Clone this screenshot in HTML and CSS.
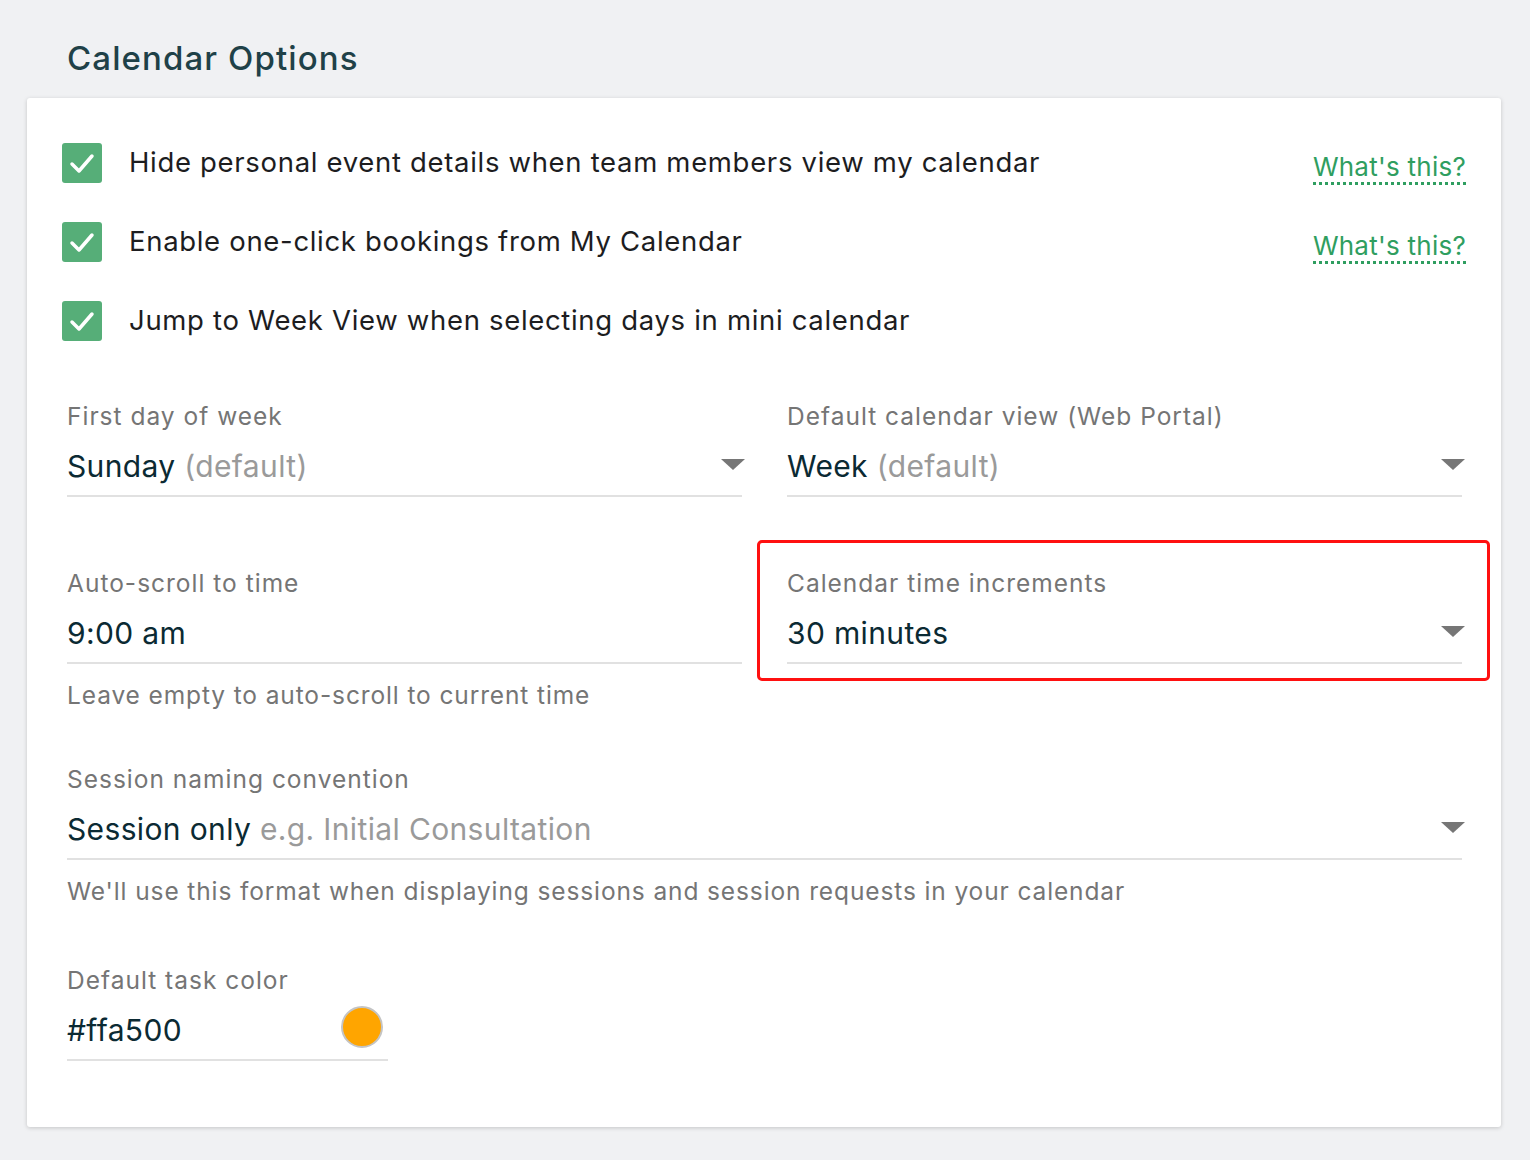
FILE: index.html
```html
<!DOCTYPE html>
<html lang="en">
<head>
  <meta charset="UTF-8" />
  <meta name="viewport" content="width=device-width, initial-scale=1.0"/>
  <title>Calendar Options</title>
  <link rel="stylesheet" href="styles.css">
</head>
<body>
  <div class="page">
    <h2 class="section-title">Calendar Options</h2>

    <div class="card">
      <div class="checks">
        <div class="check-row">
          <span class="checkbox"><svg viewBox="0 0 40 40"><path d="M10 21 L17 28 L30 13" /></svg></span>
          <span class="check-label">Hide personal event details when team members view my calendar</span>
          <a class="help-link" href="#">What's this?</a>
        </div>
        <div class="check-row">
          <span class="checkbox"><svg viewBox="0 0 40 40"><path d="M10 21 L17 28 L30 13" /></svg></span>
          <span class="check-label">Enable one-click bookings from My Calendar</span>
          <a class="help-link" href="#">What's this?</a>
        </div>
        <div class="check-row">
          <span class="checkbox"><svg viewBox="0 0 40 40"><path d="M10 21 L17 28 L30 13" /></svg></span>
          <span class="check-label">Jump to Week View when selecting days in mini calendar</span>
        </div>
      </div>

      <div class="grid row-first">
        <div class="field">
          <div class="field-label">First day of week</div>
          <div class="field-input select">
            <span class="value">Sunday <span class="muted">(default)</span></span>
            <span class="caret"></span>
          </div>
        </div>
        <div class="field">
          <div class="field-label">Default calendar view (Web Portal)</div>
          <div class="field-input select">
            <span class="value">Week <span class="muted">(default)</span></span>
            <span class="caret"></span>
          </div>
        </div>
      </div>

      <div class="grid row-second">
        <div class="field">
          <div class="field-label">Auto-scroll to time</div>
          <div class="field-input">
            <span class="value">9:00 am</span>
          </div>
          <div class="field-help">Leave empty to auto-scroll to current time</div>
        </div>
        <div class="field highlight">
          <div class="field-label">Calendar time increments</div>
          <div class="field-input select">
            <span class="value">30 minutes</span>
            <span class="caret"></span>
          </div>
        </div>
      </div>

      <div class="field row-session">
        <div class="field-label">Session naming convention</div>
        <div class="field-input select">
          <span class="value">Session only <span class="muted">e.g. Initial Consultation</span></span>
          <span class="caret"></span>
        </div>
        <div class="field-help">We'll use this format when displaying sessions and session requests in your calendar</div>
      </div>

      <div class="field row-color">
        <div class="field-label">Default task color</div>
        <div class="field-input color-input">
          <span class="value">#ffa500</span>
          <span class="swatch" style="background: #ffa500;"></span>
        </div>
      </div>
    </div>
  </div>
</body>
</html>
```

FILE: styles.css
```css
body {
  font-family: Inter, "Noto Sans", sans-serif;
  margin: 0;
  padding: 0;
  background: #f0f1f3;
  color: #0b2a33;
}
.page {
  padding: 36px 29px 32px 27px;
}
.section-title {
  margin: 0 0 18px 40px;
  font-size: 33px;
  font-weight: 500;
  letter-spacing: 1.1px;
  line-height: 44px;
  color: #1f4148;
}
.card {
  background: #ffffff;
  border-radius: 3px;
  box-shadow: 0 1px 4px rgba(0, 0, 0, 0.18);
  padding: 45px 39px 66px 40px;
}
.checks {
  display: flex;
  flex-direction: column;
  gap: 39px;
  margin-left: -5px;
}
.check-row {
  display: flex;
  align-items: center;
  height: 40px;
}
.checkbox {
  width: 40px;
  height: 40px;
  border-radius: 3px;
  background: #56ae78;
  flex: none;
}
.checkbox svg {
  display: block;
  width: 40px;
  height: 40px;
}
.checkbox path {
  fill: none;
  stroke: #ffffff;
  stroke-width: 3.5;
  stroke-linecap: round;
  stroke-linejoin: round;
}
.check-label {
  margin-left: 27px;
  margin-top: -3px;
  font-size: 27.5px;
  letter-spacing: 0.68px;
  color: #1d1d1f;
  flex: 1;
}
.help-link {
  color: #2f9e60;
  font-size: 26px;
  letter-spacing: 0.25px;
  text-decoration: none;
  border-bottom: 3px dotted #2f9e60;
  line-height: 30px;
  margin-top: 10px;
  margin-right: -4px;
}
.grid {
  display: grid;
  grid-template-columns: 1fr 1fr;
  gap: 45px;
  align-items: start;
}
.row-first {
  margin-top: 60px;
}
.row-second {
  margin-top: 71px;
}
.row-session {
  margin-top: 54px;
}
.row-color {
  margin-top: 59px;
  width: 321px;
}
.field {
  position: relative;
}
.field-label {
  font-size: 24.5px;
  letter-spacing: 1px;
  line-height: 30px;
  color: #757575;
}
.field-input {
  display: flex;
  align-items: center;
  height: 40px;
  padding: 15px 0 9px;
  border-bottom: 2px solid #e1e1e1;
  font-size: 30px;
  letter-spacing: 0.36px;
}
.value {
  flex: 1;
  white-space: nowrap;
}
.muted {
  color: #9a9a9a;
}
.caret {
  width: 0;
  height: 0;
  border-left: 12.5px solid transparent;
  border-right: 12.5px solid transparent;
  border-top: 11px solid #767676;
  margin-right: -3px;
  margin-top: -4px;
}
.field-help {
  margin-top: 16px;
  font-size: 24.5px;
  letter-spacing: 0.88px;
  line-height: 30px;
  color: #757575;
}
.swatch {
  width: 38px;
  height: 38px;
  border-radius: 50%;
  border: 2px solid #c4c4c4;
  margin-right: 5px;
  margin-top: -6px;
}
/* red outline drawn around a field to call it out */
.highlight::after {
  content: "";
  position: absolute;
  left: -30px;
  right: -28px;
  top: -28px;
  bottom: -17px;
  border: 3px solid #ff1010;
  border-radius: 5px;
  pointer-events: none;
}
```
